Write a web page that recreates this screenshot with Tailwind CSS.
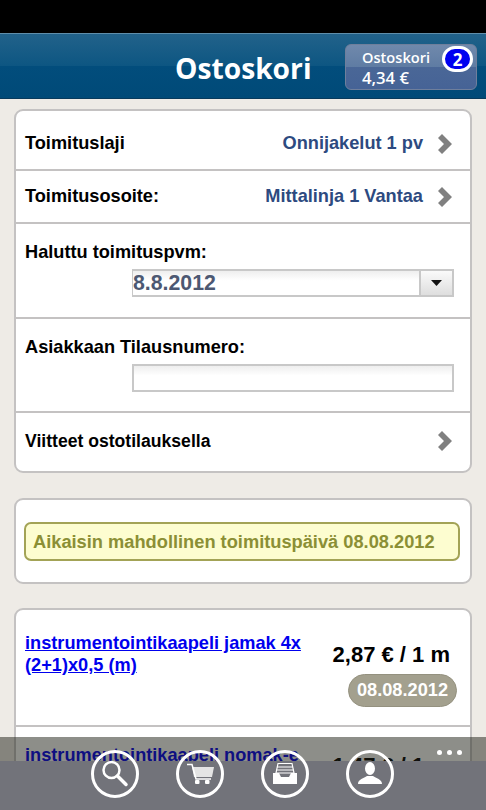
<!DOCTYPE html>
<html lang="fi">
<head>
  <meta charset="UTF-8">
  <title>Ostoskori</title>
  <script src="https://cdn.jsdelivr.net/npm/@tailwindcss/browser@4"></script>
</head>
<body class="bg-[#eeebe6] font-['Liberation_Sans',sans-serif] w-[486px] h-[810px] overflow-hidden relative">

  <div class="h-[33px] bg-black"></div>

  <header class="h-[66px] bg-[linear-gradient(#22628a,#0d5682_50%,#024d7c_50%,#004a78)] border-t border-t-[#5f8eaa] border-b border-b-[#083a5c] relative flex items-center">
    <h1 class="ml-[175px] pt-[5px] text-[28.2px] font-bold text-white font-['Open_Sans',sans-serif] leading-none">Ostoskori</h1>
    <div class="absolute left-[345px] top-[10px] w-[132px] h-[46px] rounded-[6px] border border-[#6f7f9c] bg-[linear-gradient(#7089ac,#5f7ca3_50%,#4a6797_50%,#466396)] pl-[16px] pt-[2px] text-white font-['Open_Sans',sans-serif] font-semibold">
      <div class="text-[14.6px] leading-[20px]">Ostoskori</div>
      <div class="text-[16.7px] leading-[21px]">4,34 €</div>
      <div class="absolute right-[3px] top-[1px] w-[31px] h-[26px] rounded-full bg-[#0000f0] border-[3px] border-white flex items-center justify-center text-[17px] font-bold leading-none">2</div>
    </div>
  </header>

  <main class="px-[14px] pt-[10px]">
    <section class="bg-white border-2 border-[#c4c2c2] rounded-[9px] text-black font-bold text-[18.2px]">
      <div class="h-[60px] pt-[7px] border-b-2 border-[#c4c2c2] flex items-center pl-[9px] pr-[18px]">
        <span>Toimituslaji</span>
        <span class="ml-auto text-[#2d4a80]">Onnijakelut 1 pv</span>
        <svg class="ml-[15px]" width="14" height="20" viewBox="0 0 14 20"><path d="M0 4 L4 0 L14 10 L4 20 L0 16 L6 10 Z" fill="#808080"/></svg>
      </div>
      <div class="h-[53px] border-b-2 border-[#c4c2c2] flex items-center pl-[9px] pr-[18px]">
        <span>Toimitusosoite:</span>
        <span class="ml-auto text-[#2d4a80]">Mittalinja 1 Vantaa</span>
        <svg class="ml-[15px]" width="14" height="20" viewBox="0 0 14 20"><path d="M0 4 L4 0 L14 10 L4 20 L0 16 L6 10 Z" fill="#808080"/></svg>
      </div>
      <div class="h-[95px] border-b-2 border-[#c4c2c2] pl-[9px] pr-[16px] pt-[17px]">
        <div class="leading-[22px]">Haluttu toimituspvm:</div>
        <div class="ml-[107px] mt-[6px] h-[28px] border-2 border-[#c8c8c8] flex">
          <div class="flex-1 bg-[linear-gradient(#eeeeee,#ffffff_40%)] text-[21.3px] leading-[24px] text-[#4c5872] -ml-px">8.8.2012</div>
          <div class="w-[33px] border-l-2 border-[#c8c8c8] bg-gradient-to-b from-[#fafafa] to-[#dedede] flex items-center justify-center">
            <svg width="11" height="6" viewBox="0 0 11 6"><path d="M0 0 H11 L5.5 6 Z" fill="#111"/></svg>
          </div>
        </div>
      </div>
      <div class="h-[94px] border-b-2 border-[#c4c2c2] pl-[9px] pr-[16px] pt-[17px]">
        <div class="leading-[22px]">Asiakkaan Tilausnumero:</div>
        <div class="ml-[107px] mt-[6px] h-[28px] border-2 border-[#c8c8c8] bg-[linear-gradient(#eeeeee,#ffffff_40%)]"></div>
      </div>
      <div class="h-[58px] pb-[2px] flex items-center pl-[9px] pr-[18px]">
        <span class="text-[17.6px]">Viitteet ostotilauksella</span>
        <svg class="ml-auto" width="14" height="20" viewBox="0 0 14 20"><path d="M0 4 L4 0 L14 10 L4 20 L0 16 L6 10 Z" fill="#808080"/></svg>
      </div>
    </section>

    <section class="mt-[25px] h-[86px] bg-white border-2 border-[#c4c2c2] rounded-[9px] pl-[8px] pr-[10px] pt-[22px]">
      <div class="h-[39px] rounded-[7px] border-2 border-[#a3a356] bg-[#fdfdd0] pl-[7px] flex items-center text-[18.25px] font-bold text-[#8b8f35]">Aikaisin mahdollinen toimituspäivä 08.08.2012</div>
    </section>

    <section class="mt-[24px] bg-white border-2 border-[#c4c2c2] rounded-[9px] h-[198px]">
      <div class="h-[117px] border-b-2 border-[#c4c2c2] flex pl-[9px] pr-[13px]">
        <a href="#" class="mt-[22px] w-[285px] h-[44px] text-[18.2px] leading-[22px] font-bold text-[#0000ee] underline">instrumentointikaapeli jamak 4x (2+1)x0,5 (m)</a>
        <div class="ml-auto flex flex-col items-end pt-[30px]">
          <div class="text-[22px] leading-[30px] font-bold text-black pr-[7px] whitespace-nowrap">2,87 € / 1 m</div>
          <div class="mt-[4px] h-[33px] px-[8px] rounded-full bg-[#a3a08e] border border-[#94917f] text-white font-bold text-[18.2px] flex items-center">08.08.2012</div>
        </div>
      </div>
      <div class="flex pl-[9px] pr-[13px]">
        <a href="#" class="mt-[17px] w-[285px] whitespace-nowrap text-[18.2px] leading-[22px] font-bold text-[#0000ee] underline">instrumentointikaapeli nomak-e</a>
        <div class="ml-auto pt-[24px] text-[22px] leading-[30px] font-bold text-black pr-[7px] whitespace-nowrap">1,47 € / 1 m</div>
      </div>
    </section>
  </main>

  <!-- app bar over the list -->
  <nav class="absolute left-0 right-0 top-[737px] h-[73px] flex flex-col">
    <div class="h-[24px] bg-[#1c1e14]/[.5]"></div>
    <div class="flex-1 bg-[#72737a]"></div>
    <div class="absolute right-[24px] top-[13px] flex gap-[5px]">
      <span class="w-[5px] h-[5px] rounded-full bg-white"></span>
      <span class="w-[5px] h-[5px] rounded-full bg-white"></span>
      <span class="w-[5px] h-[5px] rounded-full bg-white"></span>
    </div>
    <div class="absolute left-[91px] top-[13px] flex gap-[37px]">
      <div class="w-[48px] h-[48px] rounded-full border-[3px] border-white">
        <svg class="-m-[3px]" width="48" height="48" viewBox="0 0 48 48" fill="none" stroke="#fff">
          <circle cx="20.5" cy="20" r="8" stroke-width="2.5"/>
          <path d="M26.500 26 L35 34.500" stroke-width="3.500" stroke-linecap="round"/>
        </svg>
      </div>
      <div class="w-[48px] h-[48px] rounded-full border-[3px] border-white">
        <svg class="-m-[3px]" width="48" height="48" viewBox="0 0 48 48">
          <path d="M16 17 H38 L36 27 H18 Z" fill="#e4e4e4"/>
          <path d="M11 14.500 H16 L20 29 H35" fill="none" stroke="#fff" stroke-width="1.500"/>
          <rect x="19" y="30" width="4.500" height="4" rx="1" fill="#fff"/>
          <rect x="29" y="30" width="4.500" height="4" rx="1" fill="#fff"/>
        </svg>
      </div>
      <div class="w-[48px] h-[48px] rounded-full border-[3px] border-white">
        <svg class="-m-[3px]" width="48" height="48" viewBox="0 0 48 48">
          <path d="M17 13.500 H31 L33 23 H15 Z" fill="none" stroke="#fff" stroke-width="1.200"/>
          <path d="M16 17 H32 M15.500 20 H32.500" stroke="#fff" stroke-width="1.200"/>
          <path d="M12 23 H18 L20 27 H28 L30 23 H36 V34 H12 Z" fill="#fff"/>
        </svg>
      </div>
      <div class="w-[48px] h-[48px] rounded-full border-[3px] border-white">
        <svg class="-m-[3px]" width="48" height="48" viewBox="0 0 48 48" fill="#fff">
          <ellipse cx="24" cy="18.500" rx="5" ry="6.500"/>
          <path d="M12 34 C12 29 18 28.500 21 26 L27 26 C30 28.500 36 29 36 34 Z"/>
        </svg>
      </div>
    </div>
  </nav>
</body>
</html>
